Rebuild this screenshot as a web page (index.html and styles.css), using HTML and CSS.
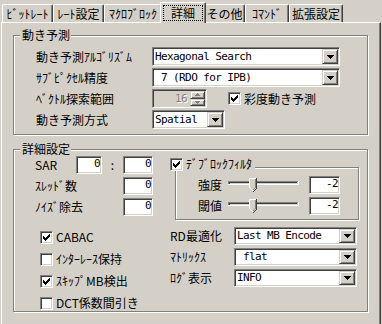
FILE: index.html
```html
<!DOCTYPE html>
<html lang="ja">
<head>
<meta charset="utf-8">
<title>詳細</title>
<link rel="stylesheet" href="styles.css">
</head>
<body>
<div class="tabctl">
  <div class="tabs">
    <div class="tab t-bitrate">ﾋﾞｯﾄﾚｰﾄ</div>
    <div class="tab t-rate">ﾚｰﾄ設定</div>
    <div class="tab t-macro">ﾏｸﾛﾌﾞﾛｯｸ</div>
    <div class="tab t-detail sel"><span class="focus">詳細</span></div>
    <div class="tab t-other">その他</div>
    <div class="tab t-cmd">ｺﾏﾝﾄﾞ</div>
    <div class="tab t-ext">拡張設定</div>
  </div>
  <div class="panel">
    <section class="group g-me">
      <div class="gtitle">動き予測</div>
      <div class="me-grid">
        <div class="lbl">動き予測ｱﾙｺﾞﾘｽﾞﾑ</div>
        <div class="combo sunken c-wide"><span class="ctext">Hexagonal Search</span><span class="dbtn raised"><svg width="7" height="4" viewBox="0 0 7 4"><path d="M0 0h7v1H0zM1 1h5v1H1zM2 2h3v1H2zM3 3h1v1H3z"/></svg></span></div>
        <div class="lbl">ｻﾌﾞﾋﾟｸｾﾙ精度</div>
        <div class="combo sunken c-wide"><span class="ctext"> 7 (RDO for IPB)</span><span class="dbtn raised"><svg width="7" height="4" viewBox="0 0 7 4"><path d="M0 0h7v1H0zM1 1h5v1H1zM2 2h3v1H2zM3 3h1v1H3z"/></svg></span></div>
        <div class="lbl">ﾍﾞｸﾄﾙ探索範囲</div>
        <div class="rowflex">
          <div class="spin sunken"><span class="stext">16</span><span class="updown"><span class="ub raised"><svg width="5" height="3" viewBox="0 0 5 3"><path fill="#fff" d="M3 1h1v1H3zM4 2h2v1H4z"/><path fill="#808080" d="M2 0h1v1H2zM1 1h3v1H1zM0 2h5v1H0z"/></svg></span><span class="ub raised"><svg width="5" height="3" viewBox="0 0 5 3"><path fill="#808080" d="M0 0h5v1H0zM1 1h3v1H1zM2 2h1v1H2z"/></svg></span></span></div>
          <div class="check c-chroma"><span class="chk sunken"><svg width="7" height="7" viewBox="0 0 7 7"><path d="M0 2h1v3H0zM1 3h1v3H1zM2 4h1v3H2zM3 3h1v3H3zM4 2h1v3H4zM5 1h1v3H5zM6 0h1v3H6z"/></svg></span><span>彩度動き予測</span></div>
        </div>
        <div class="lbl">動き予測方式</div>
        <div class="combo sunken c-spatial"><span class="ctext">Spatial</span><span class="dbtn raised"><svg width="7" height="4" viewBox="0 0 7 4"><path d="M0 0h7v1H0zM1 1h5v1H1zM2 2h3v1H2zM3 3h1v1H3z"/></svg></span></div>
      </div>
    </section>

    <section class="group g-adv">
      <div class="gtitle">詳細設定</div>
      <div class="adv-top">
        <div class="adv-left">
          <div class="lbl">SAR</div>
          <div class="edit sunken">0</div>
          <div class="colon">:</div>
          <div class="edit sunken">0</div>
          <div class="lbl span3">ｽﾚｯﾄﾞ数</div>
          <div class="edit sunken">0</div>
          <div class="lbl span3">ﾉｲｽﾞ除去</div>
          <div class="edit sunken">0</div>
        </div>
        <div class="group deblock">
          <div class="dtitle"><span class="chk sunken"><svg width="7" height="7" viewBox="0 0 7 7"><path d="M0 2h1v3H0zM1 3h1v3H1zM2 4h1v3H2zM3 3h1v3H3zM4 2h1v3H4zM5 1h1v3H5zM6 0h1v3H6z"/></svg></span><span>ﾃﾞﾌﾞﾛｯｸﾌｨﾙﾀ</span></div>
          <div class="drows">
            <div class="lbl">強度</div>
            <svg class="slider" width="72" height="18" viewBox="0 0 72 18"><rect x="0" y="5" width="70" height="1" fill="#808080"/><rect x="0" y="5" width="1" height="3" fill="#808080"/><rect x="1" y="6" width="68" height="1" fill="#404040"/><rect x="1" y="6" width="1" height="2" fill="#404040"/><rect x="0" y="8" width="71" height="1" fill="#fff"/><rect x="70" y="5" width="1" height="4" fill="#fff"/><polygon points="21,2 29,2 29,12 25,16 21,12" fill="#d4d0c8"/><rect x="21" y="2" width="7" height="1" fill="#fff"/><rect x="21" y="2" width="1" height="10" fill="#fff"/><rect x="22" y="12" width="1" height="1" fill="#fff"/><rect x="23" y="13" width="1" height="1" fill="#fff"/><rect x="24" y="14" width="1" height="1" fill="#fff"/><rect x="28" y="2" width="1" height="11" fill="#404040"/><rect x="27" y="3" width="1" height="9" fill="#808080"/><rect x="27" y="13" width="1" height="1" fill="#404040"/><rect x="26" y="14" width="1" height="1" fill="#404040"/><rect x="25" y="15" width="1" height="1" fill="#404040"/><rect x="26" y="12" width="1" height="1" fill="#808080"/><rect x="25" y="13" width="1" height="1" fill="#808080"/></svg>
            <div></div>
            <div class="edit sunken">-2</div>
            <div class="lbl">閾値</div>
            <svg class="slider" width="72" height="18" viewBox="0 0 72 18"><rect x="0" y="5" width="70" height="1" fill="#808080"/><rect x="0" y="5" width="1" height="3" fill="#808080"/><rect x="1" y="6" width="68" height="1" fill="#404040"/><rect x="1" y="6" width="1" height="2" fill="#404040"/><rect x="0" y="8" width="71" height="1" fill="#fff"/><rect x="70" y="5" width="1" height="4" fill="#fff"/><polygon points="21,2 29,2 29,12 25,16 21,12" fill="#d4d0c8"/><rect x="21" y="2" width="7" height="1" fill="#fff"/><rect x="21" y="2" width="1" height="10" fill="#fff"/><rect x="22" y="12" width="1" height="1" fill="#fff"/><rect x="23" y="13" width="1" height="1" fill="#fff"/><rect x="24" y="14" width="1" height="1" fill="#fff"/><rect x="28" y="2" width="1" height="11" fill="#404040"/><rect x="27" y="3" width="1" height="9" fill="#808080"/><rect x="27" y="13" width="1" height="1" fill="#404040"/><rect x="26" y="14" width="1" height="1" fill="#404040"/><rect x="25" y="15" width="1" height="1" fill="#404040"/><rect x="26" y="12" width="1" height="1" fill="#808080"/><rect x="25" y="13" width="1" height="1" fill="#808080"/></svg>
            <div></div>
            <div class="edit sunken">-2</div>
          </div>
        </div>
      </div>
      <div class="adv-bottom">
        <div class="checks">
          <div class="check"><span class="chk sunken"><svg width="7" height="7" viewBox="0 0 7 7"><path d="M0 2h1v3H0zM1 3h1v3H1zM2 4h1v3H2zM3 3h1v3H3zM4 2h1v3H4zM5 1h1v3H5zM6 0h1v3H6z"/></svg></span><span>CABAC</span></div>
          <div class="check"><span class="chk sunken"></span><span>ｲﾝﾀｰﾚｰｽ保持</span></div>
          <div class="check"><span class="chk sunken"><svg width="7" height="7" viewBox="0 0 7 7"><path d="M0 2h1v3H0zM1 3h1v3H1zM2 4h1v3H2zM3 3h1v3H3zM4 2h1v3H4zM5 1h1v3H5zM6 0h1v3H6z"/></svg></span><span>ｽｷｯﾌﾟMB検出</span></div>
          <div class="check"><span class="chk sunken"></span><span>DCT係数間引き</span></div>
        </div>
        <div class="combos">
          <div class="lbl">RD最適化</div>
          <div class="combo sunken c-adv"><span class="ctext">Last MB Encode</span><span class="dbtn raised"><svg width="7" height="4" viewBox="0 0 7 4"><path d="M0 0h7v1H0zM1 1h5v1H1zM2 2h3v1H2zM3 3h1v1H3z"/></svg></span></div>
          <div class="lbl">ﾏﾄﾘｯｸｽ</div>
          <div class="combo sunken c-adv"><span class="ctext"> flat</span><span class="dbtn raised"><svg width="7" height="4" viewBox="0 0 7 4"><path d="M0 0h7v1H0zM1 1h5v1H1zM2 2h3v1H2zM3 3h1v1H3z"/></svg></span></div>
          <div class="lbl">ﾛｸﾞ表示</div>
          <div class="combo sunken c-adv"><span class="ctext">INFO</span><span class="dbtn raised"><svg width="7" height="4" viewBox="0 0 7 4"><path d="M0 0h7v1H0zM1 1h5v1H1zM2 2h3v1H2zM3 3h1v1H3z"/></svg></span></div>
        </div>
      </div>
    </section>
  </div>
</div>
</body>
</html>
```

FILE: styles.css
```css
* { box-sizing: border-box; }
html, body { margin: 0; padding: 0; }
body {
  width: 382px;
  height: 324px;
  overflow: hidden;
  background: #d4d0c8;
  color: #000;
  font-family: "Noto Sans CJK JP", "Noto Sans", sans-serif;
  font-size: 12px;
  line-height: 12px;
}
svg { display: block; shape-rendering: crispEdges; }

/* 3D borders */
.sunken {
  border: 1px solid;
  border-color: #808080 #fff #fff #808080;
  box-shadow: inset 1px 1px #404040, inset -1px -1px #d4d0c8;
}
.raised {
  border: 1px solid;
  border-color: #d4d0c8 #404040 #404040 #d4d0c8;
  box-shadow: inset 1px 1px #fff, inset -1px -1px #808080;
  background: #d4d0c8;
}

/* Tabs */
.tabctl { padding-left: 1px; }
.tabs {
  display: flex;
  align-items: flex-end;
  height: 22px;
  padding-left: 1px;
}
.tab {
  height: 18px;
  display: flex;
  align-items: center;
  justify-content: center;
  border: 1px solid #fff;
  border-right-color: #404040;
  border-bottom: 0;
  border-radius: 2px 2px 0 0;
  box-shadow: inset -1px 0 #808080;
  white-space: nowrap;
  padding-top: 1px;
}
.t-bitrate { width: 51px; }
.t-rate { width: 51px; }
.t-macro { width: 58px; }
.t-other { width: 41px; }
.t-cmd { width: 44px; }
.t-ext { width: 54px; }
.tab.sel {
  width: 46px;
  height: 21px;
  margin: 0 -2px -1px;
  padding-top: 0;
  position: relative;
  z-index: 1;
  background: #d4d0c8;
}
.focus {
  border: 1px dotted #000;
  padding: 1px 7px;
}

/* Panel */
.panel {
  width: 380px;
  height: 310px;
  border: 1px solid;
  border-color: #fff #404040 #404040 #fff;
  box-shadow: inset -1px -1px #808080;
  padding: 12px 0 0 11px;
}

/* Group boxes */
.group {
  width: 355px;
  border: 1px solid #808080;
  box-shadow: inset 1px 1px #fff, 1px 1px #fff;
}
.gtitle {
  width: fit-content;
  height: 12px;
  margin: -7px 0 0 6px;
  padding: 0 1px 0 2px;
  background: #d4d0c8;
  white-space: nowrap;
}
.g-me { padding-bottom: 5px; }
.g-adv { margin-top: 14px; }

.lbl { white-space: nowrap; }

.me-grid {
  display: grid;
  grid-template-columns: 116px max-content;
  grid-auto-rows: 19px;
  row-gap: 2px;
  margin-top: 6px;
  padding-left: 22px;
  align-items: center;
}

/* Combo box */
.combo {
  display: flex;
  height: 19px;
  padding: 1px;
  background: #fff;
  font-family: "DejaVu Sans Mono", "Liberation Mono", monospace;
  font-size: 11px;
  letter-spacing: -0.6px;
}
.ctext {
  flex: 1;
  padding-left: 1px;
  white-space: pre;
  line-height: 15px;
  overflow: hidden;
}
.dbtn {
  width: 16px;
  flex: none;
  display: flex;
  align-items: center;
  justify-content: center;
}
.c-wide { width: 188px; }
.c-spatial { width: 73px; }
.c-adv { width: 123px; height: 18px; }
.c-adv .ctext { line-height: 14px; }

/* Spin (disabled) */
.rowflex { display: flex; align-items: center; }
.spin {
  width: 55px;
  height: 19px;
  display: flex;
  padding: 1px;
  background: #d4d0c8;
  font-family: "DejaVu Sans Mono", "Liberation Mono", monospace;
  font-size: 11px;
  letter-spacing: -0.6px;
}
.stext {
  flex: 1;
  text-align: right;
  padding-right: 3px;
  line-height: 15px;
  color: #808080;
  text-shadow: 1px 1px #fff;
}
.updown {
  width: 15px;
  display: flex;
  flex-direction: column;
}
.ub {
  flex: 1;
  display: flex;
  align-items: center;
  justify-content: center;
}

/* Check boxes */
.check {
  display: flex;
  align-items: center;
  gap: 3px;
  white-space: nowrap;
}
.chk {
  width: 13px;
  height: 13px;
  flex: none;
  padding: 2px;
  background: #fff;
}
.c-chroma { margin-left: 21px; }

/* Advanced */
.adv-top { display: flex; margin-top: 1px; }
.adv-left {
  width: 161px;
  padding-left: 21px;
  display: grid;
  grid-template-columns: 41px 26px 21px 30px;
  grid-auto-rows: 18px;
  row-gap: 3px;
  align-items: center;
  align-content: start;
}
.span3 { grid-column: 1 / 4; }
.colon { text-align: center; }
.edit {
  height: 18px;
  background: #fff;
  padding: 0 1px 0 2px;
  text-align: right;
  line-height: 14px;
  font-family: "DejaVu Sans Mono", "Liberation Mono", monospace;
  font-size: 11px;
  letter-spacing: -0.6px;
}

.deblock {
  width: 184px;
  margin-top: 11px;
  box-shadow: inset 1px 1px #fff, 1px 1px #fff;
}
.dtitle {
  display: flex;
  align-items: center;
  gap: 3px;
  width: fit-content;
  height: 14px;
  margin: -11px 0 0 -6px;
  padding-right: 3px;
  background: #d4d0c8;
  white-space: nowrap;
}
.drows {
  display: grid;
  grid-template-columns: 30px 72px 9px 31px;
  grid-auto-rows: 18px;
  row-gap: 3px;
  margin-top: 5px;
  padding: 0 0 4px 22px;
  align-items: center;
}

.adv-bottom { display: flex; margin-top: 7px; }
.checks {
  width: 156px;
  padding: 2px 0 0 26px;
  display: flex;
  flex-direction: column;
  gap: 6px;
}
.checks .check { height: 16px; }
.combos {
  display: grid;
  grid-template-columns: 64px 123px;
  grid-auto-rows: 18px;
  row-gap: 3px;
  align-items: center;
  align-content: start;
}
```
